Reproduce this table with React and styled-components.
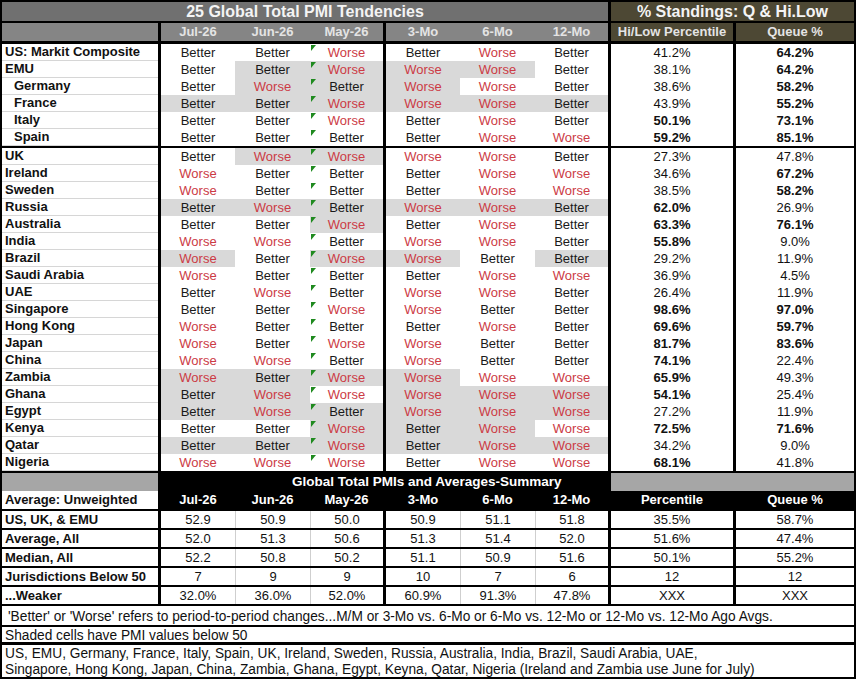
import React from 'react';
import styled, { createGlobalStyle } from 'styled-components';

const GlobalStyle = createGlobalStyle`
  body {
    margin: 0;
    background: #fff;
    font-family: "Liberation Sans", Arial, sans-serif;
  }
`;

const COLS = '156px 77px 75px 73px 77px 75px 73px 125px 121px';

const Sheet = styled.div`
  width: 856px;
  box-sizing: border-box;
  padding: 2px;
  background: #000;
  display: flex;
  flex-direction: column;
`;

const Row = styled.div`
  display: grid;
  grid-template-columns: ${COLS};
  height: ${({ $h }) => $h || 17}px;
  margin-top: ${({ $gap }) => $gap || 0}px;
`;

const Cell = styled.div`
  position: relative;
  box-sizing: border-box;
  grid-column: span ${({ $span }) => $span || 1};
  border-left: ${({ $lead, $thin }) =>
    $lead ? '3px solid #000' : $thin ? '1px solid #cfcfcf' : 'none'};
  background: ${({ $bg }) => $bg || '#fff'};
  color: ${({ $color }) => $color || '#111'};
  font-size: 13px;
  font-weight: ${({ $bold }) => ($bold ? 700 : 400)};
  text-align: ${({ $align }) => $align || 'center'};
  line-height: ${({ $h }) => $h || 17}px;
  white-space: nowrap;
  overflow: hidden;
`;

const Label = styled(Cell)`
  text-align: left;
  padding-left: ${({ $indent }) => ($indent ? 12 : 3)}px;
  font-weight: 700;
  border-bottom: ${({ $grid }) => ($grid ? '1px solid #d6d6d6' : 'none')};
  line-height: ${({ $grid, $h }) => ($grid ? 16 : $h || 17)}px;
`;

const Title = styled(Cell)`
  font-size: 16px;
  font-weight: 700;
  color: #f4f4f4;
  line-height: 19px;
`;

const Head = styled(Cell)`
  font-weight: 700;
  color: ${({ $dark }) => ($dark ? '#fff' : '#e4e4e4')};
  line-height: 18px;
`;

const SumTitle = styled(Head)`
  text-align: left;
  padding-left: 131px;
  font-size: 13.5px;
`;

const Flag = styled.span`
  position: absolute;
  top: 1px;
  left: 1px;
  width: 0;
  height: 0;
  border-top: 6px solid #1f8a1f;
  border-right: 5px solid transparent;
`;

const Note = styled.div`
  box-sizing: border-box;
  background: #fff;
  color: #111;
  margin-top: ${({ $gap }) => $gap || 0}px;
  height: ${({ $h }) => $h}px;
  padding: 0 ${({ $pad }) => $pad || 3}px;
  font-size: 15.5px;
  line-height: ${({ $lh }) => $lh}px;
  white-space: nowrap;
  overflow: hidden;
`;

/* narrow face of the footnotes, as Arial Narrow in the sheet */
const NoteText = styled.span`
  display: inline-block;
  transform: scaleX(0.885);
  transform-origin: left center;
`;

const GRAY_TITLE = '#707070';
const GRAY_HEAD = '#858585';
const OLIVE = '#4d4834';
const SHADE = '#d9d9d9';
const RED = '#cc3b45';

const upper = [
  ['US: Markit Composite', 'BBWBWB', '000000', 41.2, 64.2],
  ['EMU', 'BBWWWB', '011110', 38.1, 64.2],
  ['Germany', 'BWBWWB', '011100', 38.6, 58.2, true],
  ['France', 'BBWWWB', '111111', 43.9, 55.2, true],
  ['Italy', 'BBWBWB', '000000', 50.1, 73.1, true],
  ['Spain', 'BBBBWW', '000000', 59.2, 85.1, true],
];

const lower = [
  ['UK', 'BWWWWB', '011000', 27.3, 47.8],
  ['Ireland', 'WBBBWW', '000000', 34.6, 67.2],
  ['Sweden', 'WBBBWW', '000000', 38.5, 58.2],
  ['Russia', 'BWBWWB', '111111', 62.0, 26.9],
  ['Australia', 'BBWBWB', '001000', 63.3, 76.1],
  ['India', 'WWBWWB', '000000', 55.8, 9.0],
  ['Brazil', 'WBWWBB', '101101', 29.2, 11.9],
  ['Saudi Arabia', 'WBBBWW', '000000', 36.9, 4.5],
  ['UAE', 'BWBWWB', '000000', 26.4, 11.9],
  ['Singapore', 'BBWWBB', '000000', 98.6, 97.0],
  ['Hong Kong', 'WBBBWB', '000000', 69.6, 59.7],
  ['Japan', 'WBWWBB', '000000', 81.7, 83.6],
  ['China', 'WWBWBB', '000000', 74.1, 22.4],
  ['Zambia', 'WBWWWW', '111100', 65.9, 49.3],
  ['Ghana', 'BWWWWW', '110111', 54.1, 25.4],
  ['Egypt', 'BWBWWW', '111111', 27.2, 11.9],
  ['Kenya', 'BBWBWW', '001110', 72.5, 71.6],
  ['Qatar', 'BBWBWW', '111111', 34.2, 9.0],
  ['Nigeria', 'WWWBWW', '000000', 68.1, 41.8],
];

const periods = ['Jul-26', 'Jun-26', 'May-26', '3-Mo', '6-Mo', '12-Mo'];

const summary = [
  ['US, UK, & EMU', ['52.9', '50.9', '50.0', '50.9', '51.1', '51.8', '35.5%', '58.7%']],
  ['Average, All', ['52.0', '51.3', '50.6', '51.3', '51.4', '52.0', '51.6%', '47.4%']],
  ['Median, All', ['52.2', '50.8', '50.2', '51.1', '50.9', '51.6', '50.1%', '55.2%']],
  ['Jurisdictions Below 50', ['7', '9', '9', '10', '7', '6', '12', '12']],
  ['...Weaker', ['32.0%', '36.0%', '52.0%', '60.9%', '91.3%', '47.8%', 'XXX', 'XXX']],
];

const isLead = (i) => i === 0 || i === 3 || i === 6 || i === 7;

const DataRow = ({ row, gap }) => {
  const [name, vals, shade, pct, queue, indent] = row;
  return (
    <Row $gap={gap}>
      <Label $grid $indent={indent}>{name}</Label>
      {vals.split('').map((v, i) => (
        <Cell
          key={i}
          $lead={i === 0 || i === 3}
          $bg={shade[i] === '1' ? SHADE : '#fff'}
          $color={v === 'W' ? RED : '#1a1a1a'}
        >
          {i === 2 && <Flag />}
          {v === 'W' ? 'Worse' : 'Better'}
        </Cell>
      ))}
      <Cell $lead $bold={pct >= 50}>{pct.toFixed(1)}%</Cell>
      <Cell $lead $bold={queue >= 50}>{queue.toFixed(1)}%</Cell>
    </Row>
  );
};

const App = () => (
  <>
    <GlobalStyle />
    <Sheet>
      <Row $h={19}>
        <Title $span={7} $bg={GRAY_TITLE}>25 Global Total PMI Tendencies</Title>
        <Title $span={2} $lead $bg={OLIVE}>% Standings: Q &amp; Hi.Low</Title>
      </Row>
      <Row $h={18} $gap={2}>
        <Head $bg={GRAY_HEAD} />
        {periods.map((p, i) => (
          <Head key={p} $lead={i === 0 || i === 3} $bg={GRAY_HEAD}>{p}</Head>
        ))}
        <Head $lead $bg={OLIVE}>Hi/Low Percentile</Head>
        <Head $lead $bg={OLIVE}>Queue %</Head>
      </Row>

      {upper.map((r, i) => (
        <DataRow key={r[0]} row={r} gap={i === 0 ? 3 : 0} />
      ))}
      {lower.map((r, i) => (
        <DataRow key={r[0]} row={r} gap={i === 0 ? 2 : 0} />
      ))}

      <Row $h={18} $gap={2}>
        <Cell $bg="#a6a6a6" />
        <SumTitle $span={6} $lead $dark $bg="#000">
          Global Total PMIs and Averages-Summary
        </SumTitle>
        <Cell $span={2} $lead $bg="#a6a6a6" />
      </Row>
      <Row $h={18}>
        <Label $h={18}>Average: Unweighted</Label>
        {[...periods, 'Percentile', 'Queue %'].map((p, i) => (
          <Head key={p} $lead={isLead(i)} $dark $bg="#000">{p}</Head>
        ))}
      </Row>
      {summary.map(([name, vals]) => (
        <Row key={name} $gap={2}>
          <Label>{name}</Label>
          {vals.map((v, i) => (
            <Cell key={i} $lead={isLead(i)} $thin={!isLead(i)}>{v}</Cell>
          ))}
        </Row>
      ))}

      <Note $gap={2} $h={19} $lh={19} $pad={6}>
        <NoteText>
          'Better' or 'Worse' refers to period-to-period changes...M/M or 3-Mo vs. 6-Mo or 6-Mo vs. 12-Mo or 12-Mo vs. 12-Mo Ago Avgs.
        </NoteText>
      </Note>
      <Note $gap={2} $h={15} $lh={15}>
        <NoteText>Shaded cells have PMI values below 50</NoteText>
      </Note>
      <Note $gap={3} $h={32} $lh={16}>
        <NoteText>
          US, EMU, Germany, France, Italy,  Spain, UK, Ireland, Sweden, Russia, Australia, India, Brazil, Saudi Arabia, UAE,
          <br />
          Singapore, Hong Kong, Japan, China, Zambia, Ghana, Egypt, Keyna, Qatar, Nigeria (Ireland and Zambia use June for July)
        </NoteText>
      </Note>
    </Sheet>
  </>
);

export default App;
